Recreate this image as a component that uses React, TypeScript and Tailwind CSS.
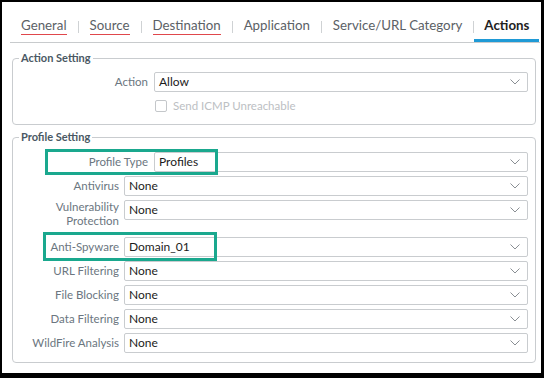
import React from "react"

type Row = {
  label: string[]
  value: string
}

const tabs = ["General", "Source", "Destination", "Application", "Service/URL Category", "Actions"]
const flagged = ["General", "Source", "Destination"]

const profileRows: Row[] = [
  { label: ["Antivirus"], value: "None" },
  { label: ["Vulnerability", "Protection"], value: "None" },
  { label: ["Anti-Spyware"], value: "Domain_01" },
  { label: ["URL Filtering"], value: "None" },
  { label: ["File Blocking"], value: "None" },
  { label: ["Data Filtering"], value: "None" },
  { label: ["WildFire Analysis"], value: "None" },
]

const Chevron = () => (
  <svg width="10" height="6" viewBox="0 0 10 6" className="shrink-0">
    <polyline points="0.5,0.5 5,5 9.5,0.5" fill="none" stroke="#8a8f94" strokeWidth="1" />
  </svg>
)

const Select = ({ value }: { value: string }) => (
  <div className="flex-1 h-[20px] flex items-center justify-between border border-[#c9cccf] rounded-[2px] pl-[4px] pr-[7px] bg-white">
    <span className="text-[12px] text-[#1b1b1b] leading-none">{value}</span>
    <Chevron />
  </div>
)

const App: React.FC = () => {
  return (
    <div className="relative w-[544px] h-[378px] bg-black pt-[2px] pl-[2px] pr-[3px] pb-[5px]" style={{ fontFamily: "Lato, 'Open Sans', sans-serif" }}>
      <div className="w-full h-full bg-white pl-[8px] pr-[1px]">

        {/* tabs */}
        <div className="flex items-end h-[41px] border-b border-[#c8cbcd] whitespace-nowrap">
          {tabs.map((t, i) => {
            const active = t === "Actions"
            return (
              <div key={t} className="flex items-end">
                {i > 0 && <div className="w-px h-[12px] bg-[#cfd2d4] mb-[9px]" />}
                <div className={`h-[32px] pt-[7px] ${active ? "px-[10px] border-b-[3px] border-[#1f9ad6] font-bold text-[#222]" : "px-[11px] text-[#5b6166]"}`}>
                  <span className={`block text-[13.3px] leading-[17px] ${flagged.includes(t) ? "border-b border-[#e0474c]" : ""}`}>{t}</span>
                </div>
              </div>
            )
          })}
        </div>

        <div className="pl-[2px] pr-[4px]">
          {/* action setting */}
          <fieldset className="mt-[8px] border border-[#c9cccf] rounded-[4px] pt-[7px] pb-[12px] pr-[7px]">
            <legend className="ml-[6px] px-[2px] text-[11px] leading-[14px] font-bold text-[#4a5863]">Action Setting</legend>
            <div className="flex items-center gap-[6px]">
              <div className="w-[135px] text-right text-[11.5px] text-[#6b7680]">Action</div>
              <Select value="Allow" />
            </div>
            <div className="flex items-center gap-[6px] ml-[142px] mt-[8px]">
              <div className="w-[12px] h-[12px] border border-[#c4c7ca] rounded-[2px]" />
              <span className="text-[11.5px] leading-[12px] text-[#bcc0c3]">Send ICMP Unreachable</span>
            </div>
          </fieldset>

          {/* profile setting */}
          <fieldset className="mt-[5px] border border-[#c9cccf] rounded-[4px] pt-[8px] pb-[9px] pr-[7px]">
            <legend className="ml-[6px] px-[2px] text-[11px] leading-[14px] font-bold text-[#4a5863]">Profile Setting</legend>
            <div className="flex flex-col gap-[4px]">
              <div className="flex items-center gap-[6px] h-[20px]">
                <div className="w-[135px] text-right text-[11.5px] text-[#6b7680]">Profile Type</div>
                <Select value="Profiles" />
              </div>
              {profileRows.map((r) => (
                <div key={r.label.join(" ")} className={`flex gap-[5px] ${r.label.length > 1 ? "items-start h-[33px]" : "items-center h-[20px]"}`}>
                  <div className="w-[106px] text-right text-[11.5px] leading-[14px] text-[#6b7680]">
                    {r.label.map((l) => (
                      <div key={l}>{l}</div>
                    ))}
                  </div>
                  <Select value={r.value} />
                </div>
              ))}
            </div>
          </fieldset>
        </div>
      </div>

      {/* highlight boxes */}
      <div className="absolute left-[45px] top-[149px] w-[173px] h-[26px] border-[3px] border-[#1aa88e]" />
      <div className="absolute left-[43px] top-[232px] w-[174px] h-[29px] border-[3px] border-[#1aa88e]" />
    </div>
  )
}

export default App
